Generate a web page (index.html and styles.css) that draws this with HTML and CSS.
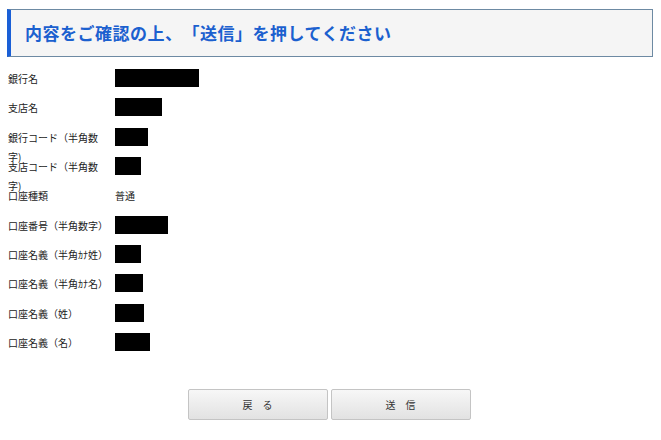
FILE: index.html
```html
<!DOCTYPE html>
<html lang="ja">
<head>
    <meta charset="UTF-8">
    <meta name="viewport" content="width=device-width, initial-scale=1.0">
    <title>内容確認</title>
    <link rel="stylesheet" href="styles.css">
</head>
<body>

    <div class="page">
        <h1 class="title">内容をご確認の上、「送信」を押してください</h1>

        <div class="confirm">
            <div class="row">
                <div class="label">銀行名</div>
                <div class="value"><span class="mask w84"></span></div>
            </div>
            <div class="row">
                <div class="label">支店名</div>
                <div class="value"><span class="mask w47"></span></div>
            </div>
            <div class="row">
                <div class="label">銀行コード（半角数字)</div>
                <div class="value"><span class="mask w33"></span></div>
            </div>
            <div class="row">
                <div class="label">支店コード（半角数字)</div>
                <div class="value"><span class="mask w26"></span></div>
            </div>
            <div class="row">
                <div class="label">口座種類</div>
                <div class="value">普通</div>
            </div>
            <div class="row">
                <div class="label">口座番号（半角数字）</div>
                <div class="value"><span class="mask w53"></span></div>
            </div>
            <div class="row">
                <div class="label">口座名義（半角ｶﾅ姓）</div>
                <div class="value"><span class="mask w26"></span></div>
            </div>
            <div class="row">
                <div class="label">口座名義（半角ｶﾅ名）</div>
                <div class="value"><span class="mask w28"></span></div>
            </div>
            <div class="row">
                <div class="label">口座名義（姓）</div>
                <div class="value"><span class="mask w29"></span></div>
            </div>
            <div class="row">
                <div class="label">口座名義（名）</div>
                <div class="value"><span class="mask w35"></span></div>
            </div>
        </div>

        <div class="actions">
            <button class="btn" type="button">戻　る</button>
            <button class="btn" type="button">送　信</button>
        </div>
    </div>

</body>
</html>
```

FILE: styles.css
```css
body {
    margin: 0;
    background-color: #ffffff;
    color: #222222;
    font-family: "Noto Sans CJK JP", "Noto Sans", sans-serif;
    font-size: 10px;
}
.page {
    padding: 9px 8px 0 7px;
}
.title {
    margin: 0;
    display: flex;
    align-items: center;
    box-sizing: border-box;
    height: 48px;
    padding-left: 14px;
    padding-bottom: 1px;
    background-color: #f5f5f5;
    border: 1px solid #6d8aa3;
    border-left: 4px solid #1a5fd6;
    color: #1b60cf;
    font-size: 17px;
    font-weight: bold;
    text-spacing-trim: space-all;
    letter-spacing: 0.5px;
}
.confirm {
    margin-top: 7px;
    padding-left: 1px;
}
.row {
    display: flex;
    align-items: flex-start;
    height: 29.33px;
}
.label {
    width: 100px;
    margin-top: 5px;
    margin-right: 7px;
    line-height: 19px;
}
.value {
    margin-top: 5px;
    line-height: 19px;
    min-height: 19px;
}
.mask {
    display: block;
    height: 18px;
    background-color: #000000;
}
.w84 { width: 84px; }
.w53 { width: 53px; }
.w47 { width: 47px; }
.w35 { width: 35px; }
.w33 { width: 33px; }
.w29 { width: 29px; }
.w28 { width: 28px; }
.w26 { width: 26px; }
.actions {
    display: flex;
    justify-content: center;
    gap: 3px;
    margin-top: 32px;
    padding-right: 2px;
}
.btn {
    width: 140px;
    height: 31px;
    border: 1px solid #c4c4c4;
    border-radius: 2px;
    background: linear-gradient(#f7f7f7, #e2e2e2);
    color: #333333;
    font-family: "Noto Sans CJK JP", sans-serif;
    font-size: 10px;
    cursor: pointer;
}
.btn:hover {
    background: linear-gradient(#ffffff, #e9e9e9);
}
```
